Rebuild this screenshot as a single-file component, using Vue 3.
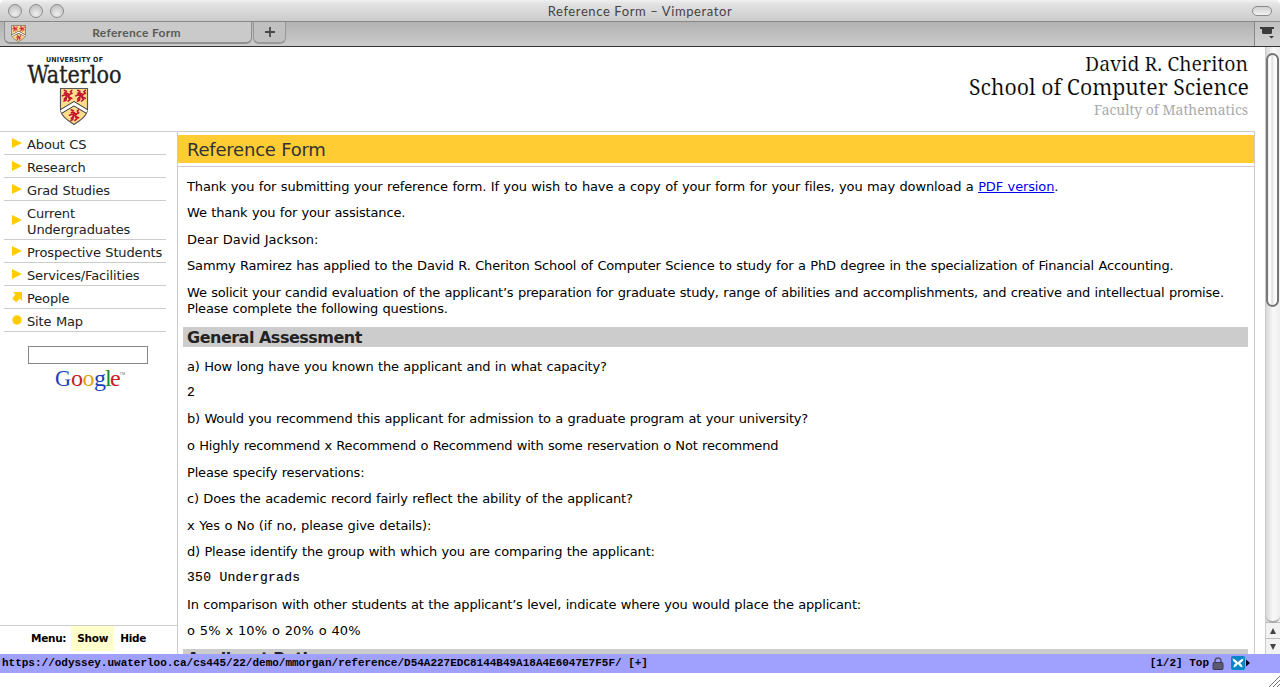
<script setup>
const menu = [
  { label: 'About CS', icon: 'tri' },
  { label: 'Research', icon: 'tri' },
  { label: 'Grad Studies', icon: 'tri' },
  { label: 'Current Undergraduates', icon: 'tri' },
  { label: 'Prospective Students', icon: 'tri' },
  { label: 'Services/Facilities', icon: 'tri' },
  { label: 'People', icon: 'arrow' },
  { label: 'Site Map', icon: 'dot' },
]
const questions = [
  { text: 'a) How long have you known the applicant and in what capacity?' },
  { text: '2', mono: true },
  { text: 'b) Would you recommend this applicant for admission to a graduate program at your university?' },
  { text: 'o Highly recommend x Recommend o Recommend with some reservation o Not recommend', tight: true },
  { text: 'Please specify reservations:' },
  { text: 'c) Does the academic record fairly reflect the ability of the applicant?' },
  { text: 'x Yes o No (if no, please give details):', loose: true },
  { text: 'd) Please identify the group with which you are comparing the applicant:' },
  { text: '350 Undergrads', mono: true },
  { text: 'In comparison with other students at the applicant’s level, indicate where you would place the applicant:' },
  { text: 'o 5% x 10% o 20% o 40%', wide: true },
]
</script>

<template>
  <div class="window">
    <svg width="0" height="0" class="defs">
      <defs>
        <g id="lion" fill="none" stroke="#c4122f" stroke-width="1.3" stroke-linecap="round">
          <path d="M2.600 1 4.400 1.800 3 3.200 5 3.600 4.600 6 2.600 8M5 3.200 7.200 4.600 6.200 6.400 7.800 8.200 6 9.600M3.200 4.600 1 5.400M4.600 6.400 4.200 8.800 2.400 9.600M7 4.600 9.400 3.400 8.200 2 9.400 1M7.200 6.600 9.400 7.400M4 5 6.500 5.500" />
        </g>
        <g id="shield">
          <path d="M1 1h27v19.500c0 8.500-7.500 12.500-13.500 16.500C8.500 33 1 29 1 20.500Z" fill="#fedd8c" stroke="#555" stroke-width="1.200" />
          <path d="M1.500 24 14.500 16.200 27.500 24" fill="none" stroke="#333" stroke-width="4.600" />
          <path d="M1.500 24 14.500 16.200 27.500 24" fill="none" stroke="#fff" stroke-width="2.800" />
          <use href="#lion" transform="translate(1.800 1.600) scale(1.120 1.250)" />
          <use href="#lion" transform="translate(15.300 1.600) scale(1.120 1.250)" />
          <use href="#lion" transform="translate(8.800 21) scale(1.100 1.250)" />
        </g>
      </defs>
    </svg>

    <div class="titlebar">
      <div class="lights"><i></i><i></i><i></i></div>
      <div class="wintitle">Reference Form – Vimperator</div>
      <div class="pill"></div>
    </div>

    <div class="tabs">
      <div class="tab">
        <svg class="fav" width="15" height="17" viewBox="0 0 29 38" preserveAspectRatio="none"><use href="#shield" /></svg>
        <span>Reference Form</span>
      </div>
      <div class="newtab">
        <svg width="12" height="12" viewBox="0 0 12 12"><path d="M1 6h10M6 1v10" stroke="#4a4a4a" stroke-width="1.800" /></svg>
      </div>
      <div class="alltabs">
        <svg width="16" height="14" viewBox="0 0 16 14" fill="#3c3c3c"><path d="M1 1h14v2h-2v3.500q0 1.500-1.500 1.500h-7Q3 8 3 6.500V3H1ZM10 10h5l-2.500 2.600Z" /></svg>
      </div>
    </div>

    <div class="viewport">
      <div class="page">
        <header>
          <svg class="logo" width="100" height="80" viewBox="0 0 100 80">
            <text x="20" y="10.500" class="univ" textLength="57" lengthAdjust="spacing">UNIVERSITY OF</text>
            <text x="1.500" y="32" class="wat" textLength="94" lengthAdjust="spacingAndGlyphs">Waterloo</text>
            <use href="#shield" transform="translate(33.500 36.500)" />
          </svg>
          <svg class="school" width="300" height="76" viewBox="0 0 300 76">
            <text x="135" y="20" textLength="163" lengthAdjust="spacingAndGlyphs" font-size="20.500">David R. Cheriton</text>
            <text x="19" y="44" textLength="280" lengthAdjust="spacingAndGlyphs" font-size="21">School of Computer Science</text>
            <text x="144" y="64" textLength="154" lengthAdjust="spacingAndGlyphs" font-size="14" class="faculty">Faculty of Mathematics</text>
          </svg>
        </header>
        <div class="columns">
          <aside>
            <nav>
              <a v-for="m in menu" :key="m.label">
                <svg width="11" height="12" viewBox="0 0 11 12" fill="#fc0">
                  <path v-if="m.icon === 'tri'" d="M0 1 10 6 0 11Z" />
                  <path v-else-if="m.icon === 'arrow'" d="M1 1h9v9L7.800 7.800 4.500 11 3 10.500 0.500 8 0.500 7 3.500 3.600Z" />
                  <circle v-else cx="5" cy="6" r="4.700" />
                </svg>
                <span>{{ m.label }}</span>
              </a>
            </nav>
            <div class="search"></div>
            <svg class="google" width="72" height="26" viewBox="0 0 72 26">
              <g font-size="24">
                <text x="0" y="18" fill="#1a3fb8" textLength="16" lengthAdjust="spacingAndGlyphs">G</text>
                <text x="16" y="18" fill="#c8202a">o</text>
                <text x="27.500" y="18" fill="#e0a410">o</text>
                <text x="39" y="18" fill="#1a3fb8">g</text>
                <text x="50" y="18" fill="#168a2a">l</text>
                <text x="55" y="18" fill="#c8202a">e</text>
              </g>
              <text x="64.500" y="7" font-size="4" class="tm">TM</text>
            </svg>
            <div class="menubar"><span>Menu:</span><b>Show</b><span>Hide</span></div>
          </aside>
          <main>
            <h1>Reference Form</h1>
            <div class="body">
              <p class="intro">Thank you for submitting your reference form. If you wish to have a copy of your form for your files, you may download a <a class="link">PDF version</a>.</p>
              <p>We thank you for your assistance.</p>
              <p class="greeting">Dear David Jackson:</p>
              <p class="applied">Sammy Ramirez has applied to the David R. Cheriton School of Computer Science to study for a PhD degree in the specialization of Financial Accounting.</p>
              <p class="tight">We solicit your candid evaluation of the applicant’s preparation for graduate study, range of abilities and accomplishments, and creative and intellectual promise.<br>Please complete the following questions.</p>
              <h2>General Assessment</h2>
              <p v-for="q in questions" :key="q.text" :class="{ mono: q.mono, wide: q.wide, tight: q.tight, loose: q.loose }">{{ q.text }}</p>
              <h2 class="next">Applicant Rating</h2>
            </div>
          </main>
        </div>
      </div>
      <div class="scroll">
        <div class="thumb"></div>
        <div class="btn"><svg width="8" height="8" viewBox="0 0 8 8"><path d="M4 1 7 7H1Z" fill="#444" /></svg></div>
        <div class="btn"><svg width="8" height="8" viewBox="0 0 8 8"><path d="M4 7 7 1H1Z" fill="#444" /></svg></div>
      </div>
    </div>

    <div class="status">
      <span class="url">https://odyssey.uwaterloo.ca/cs445/22/demo/mmorgan/reference/D54A227EDC8144B49A18A4E6047E7F5F/ [+]</span>
      <span class="pos">[1/2] Top</span>
      <svg class="lock" width="12" height="13" viewBox="0 0 12 13"><path d="M3 6V4a3 3 0 0 1 6 0v2" fill="none" stroke="#55556a" stroke-width="1.600" /><rect x="1" y="5.500" width="10" height="7" rx="1" fill="#5c5a70" stroke="#3c3a50" /></svg>
      <svg class="vimp" width="14" height="14" viewBox="0 0 14 14"><rect width="14" height="14" rx="2" fill="#0a84c8" /><path d="M1.500 2.500C4.500 3 6 5 7 6.500 8 5 9.500 3 12.500 2.500 12 5.500 10.500 6.500 9 7c1.200.8 2.200 2 2.500 4.500C9.500 11 8 9.500 7 8 6 9.500 4.500 11 2.500 11.500 2.800 9 3.800 7.800 5 7 3.500 6.500 2 5.500 1.500 2.500Z" fill="#fff" /></svg>
      <svg class="more" width="5" height="8" viewBox="0 0 5 8"><path d="M1 0.500 5 4 1 7.500Z" fill="#000" /></svg>
    </div>
    <div class="bottom">
      <svg width="12" height="12" viewBox="0 0 12 12"><path d="M1 12 12 1M5 12l7-7M9 12l3-3" stroke="#777" stroke-width="1" /></svg>
    </div>
  </div>
</template>

<style>
body { background: #fff; overflow: hidden; }
</style>

<style scoped>
* { box-sizing: border-box; }
svg { overflow: visible; }
.window { width: 1280px; height: 687px; display: flex; flex-direction: column; overflow: hidden; background: #fff; font-family: "DejaVu Sans", sans-serif; font-size: 13px; color: #000; }
.defs { position: absolute; }
.titlebar { height: 22px; flex: none; display: flex; align-items: center; justify-content: space-between; padding: 0 8px; background: linear-gradient(#f0f0f0, #e2e2e2 20%, #cbcbcb); border-bottom: 1px solid #888; border-radius: 5px 5px 0 0; }
.lights { display: flex; gap: 7px; width: 80px; }
.lights i { width: 14px; height: 14px; border-radius: 50%; border: 1px solid #8d8d8d; background: radial-gradient(circle at 50% 75%, #efefef, #c4c4c4 75%); }
.wintitle { font-family: "Lato", sans-serif; font-size: 13px; color: #444; letter-spacing: .6px; }
.pill { width: 20px; height: 10px; margin-left: 60px; border: 1px solid #8a8a8a; border-radius: 5px; background: linear-gradient(#d0d0d0, #f2f2f2); }
.tabs { height: 25px; flex: none; display: flex; background: linear-gradient(#b2b2b2, #cbcbcb); border-bottom: 1px solid #333; padding-left: 4px; }
.tab { width: 248px; height: 22px; display: flex; align-items: center; background: #cacaca; border: 1px solid #8f8f8f; border-width: 0 1px 2px; border-radius: 0 0 6px 6px; padding-left: 6px; }
.fav { margin-top: 2px; }
.tab span { flex: 1; text-align: center; font-family: "Lato", sans-serif; font-weight: 700; font-size: 12px; color: #5a5a5a; letter-spacing: .3px; padding-right: 4px; }
.newtab { width: 33px; height: 22px; margin-left: 1px; display: flex; align-items: center; justify-content: center; border: 1px solid #989898; border-width: 0 1px 2px; border-radius: 0 0 6px 6px; background: #c0c0c0; }
.alltabs { margin-left: auto; width: 26px; border-left: 1px solid #888; padding: 4px 0 0 4px; background: linear-gradient(#c0c0c0, #d2d2d2); }
.viewport { height: 607px; flex: none; display: flex; overflow: hidden; }
.page { width: 1265px; display: flex; flex-direction: column; padding-right: 10px; }
header { height: 84px; flex: none; display: flex; justify-content: space-between; padding: 4px 5px 0 26px; }
.univ { font: 700 7px "DejaVu Sans Condensed", "DejaVu Sans", sans-serif; font-stretch: condensed; fill: #222; }
.wat { font: 23.500px "DejaVu Serif Condensed", "DejaVu Serif", serif; fill: #231f20; stroke: #231f20; stroke-width: .3; }
.school text { font-family: "Noto Serif", "DejaVu Serif Condensed", "DejaVu Serif", serif; stroke: #fff; stroke-width: .18; }
.school .faculty { fill: #aaa; stroke: none; }
.columns { flex: 1; min-height: 0; display: flex; border-top: 1px solid #ccc; }
aside { width: 177px; flex: none; display: flex; flex-direction: column; }
nav { width: 162px; margin-left: 4px; }
nav a { display: flex; align-items: center; border-bottom: 1px solid #ccc; padding: 5px 0 1px 8px; line-height: 16px; color: #222; letter-spacing: -.13px; word-spacing: .5px; }
nav a svg { margin: -5px 4px 0 0; flex: none; }
.search { width: 120px; height: 18px; margin: 14px 0 0 28px; border: 1px solid #888; flex: none; }
.google { margin: 4px 0 0 55px; flex: none; font-family: "Liberation Serif", serif; }
.tm { font-family: "Liberation Sans", sans-serif; fill: #777; }
.menubar { margin-top: auto; height: 29px; border-top: 1px solid #ccc; display: flex; align-items: flex-start; font-weight: 700; font-size: 10.500px; letter-spacing: -.3px; line-height: 25px; padding-left: 31px; }
.menubar b { margin: 0 6px 0 5px; width: 43px; text-align: center; background: #ffffcc; }
main { flex: 1; min-width: 0; border-left: 1px solid #ccc; border-right: 1px solid #ccc; padding-top: 3px; }
h1 { margin: 0; height: 28px; background: #fc3; color: #333; font-weight: 400; font-size: 18px; letter-spacing: -.22px; line-height: 29px; padding-left: 9px; }
.body { margin-top: 3px; border-top: 1px solid #ccc; padding: 11.850px 6px 0 5px; }
p { margin: 0 0 10.520px 4px; line-height: 16px; white-space: nowrap; letter-spacing: -.17px; word-spacing: .5px; }
.intro { letter-spacing: -.13px; }
.greeting { letter-spacing: -.03px; }
.applied { letter-spacing: -.155px; }
.tight { letter-spacing: -.19px; }
.loose { letter-spacing: -.09px; }
.wide { letter-spacing: .11px; margin-bottom: 10px; }
.link { color: #00e; text-decoration: underline; }
h2 { margin: 0 0 11.330px; height: 20px; background: #ccc; color: #222; font-size: 16px; font-weight: 700; letter-spacing: -.5px; line-height: 20px; padding: 1px 0 0 4px; }
.next { padding-top: 0; }
.mono { font-family: "Liberation Mono", monospace; letter-spacing: .3px; word-spacing: 0; margin-top: -.2px; margin-bottom: 10.400px; -webkit-text-stroke: .15px #000; }
.scroll { width: 15px; border-left: 1px solid #ccc; background: linear-gradient(90deg, #d8d8d8, #f8f8f8 50%, #eee); display: flex; flex-direction: column; padding-top: 6px; }
.thumb { width: 13px; height: 254px; margin-bottom: auto; border: 2px solid #777; border-radius: 7px; background: linear-gradient(90deg, #eee, #fff 25%, #ddd 45%, #fafafa 70%); }
/* the lower end of the track is rounded off above the arrow buttons */
.thumb + .btn { position: relative; }
.thumb + .btn::before { content: ""; position: absolute; left: 0; bottom: 15px; width: 14px; height: 10px; border-bottom: 2px solid #aaa; border-radius: 0 0 7px 7px; }
.btn { height: 16px; border-top: 1px solid #bbb; display: flex; align-items: center; justify-content: center; background: #f2f2f2; }
.status { height: 19px; flex: none; display: flex; align-items: center; background: #a0a0ff; font-family: "Liberation Mono", monospace; font-weight: 700; font-size: 11px; letter-spacing: -.01px; padding: 0 30px 1px 2px; white-space: pre; }
.url { flex: 1; }
.lock { margin: 0 7px 0 3px; }
.bottom { flex: 1; display: flex; justify-content: flex-end; align-items: flex-end; }
</style>
